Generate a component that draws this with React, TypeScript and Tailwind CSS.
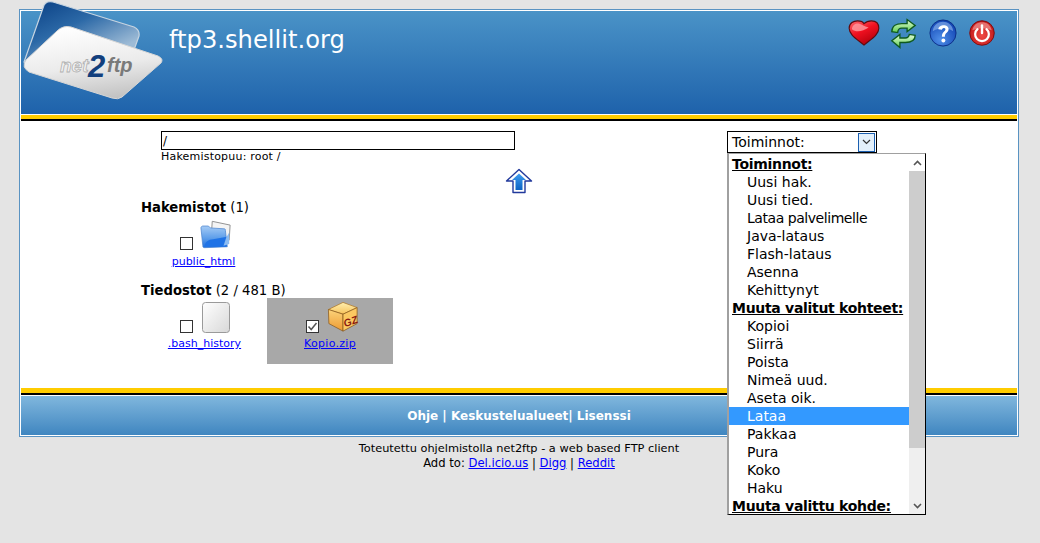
import React from 'react';

const MENU: { label: string; group?: boolean; active?: boolean; tight?: boolean }[] = [
  { label: 'Toiminnot:', group: true },
  { label: 'Uusi hak.' },
  { label: 'Uusi tied.' },
  { label: 'Lataa palvelimelle', tight: true },
  { label: 'Java-lataus' },
  { label: 'Flash-lataus' },
  { label: 'Asenna' },
  { label: 'Kehittynyt' },
  { label: 'Muuta valitut kohteet:', group: true },
  { label: 'Kopioi' },
  { label: 'Siirrä' },
  { label: 'Poista' },
  { label: 'Nimeä uud.' },
  { label: 'Aseta oik.' },
  { label: 'Lataa', active: true },
  { label: 'Pakkaa' },
  { label: 'Pura' },
  { label: 'Koko' },
  { label: 'Haku' },
  { label: 'Muuta valittu kohde:', group: true },
];

// sticks out of the header at the top, so it sits over the band
const Logo = () => (
  <svg width="150" height="105" viewBox="0 0 150 105" className="absolute left-0 top-[-11px]">
    <defs>
      <linearGradient id="lgBack" x1="0.15" y1="0" x2="0.75" y2="0.75">
        <stop offset="0" stopColor="#0d4488" />
        <stop offset="0.45" stopColor="#2c69a7" />
        <stop offset="1" stopColor="#9dbbd6" />
      </linearGradient>
      <linearGradient id="lgFront" x1="0.35" y1="0" x2="0.6" y2="1">
        <stop offset="0" stopColor="#ffffff" />
        <stop offset="0.55" stopColor="#ebebeb" />
        <stop offset="1" stopColor="#c2c2c2" />
      </linearGradient>
    </defs>
    <path d="M3 62 L22 8 Q24 0 32 2 L113 27 Q119 30 118 36 L113 50 L60 70 Z" fill="url(#lgBack)" stroke="#c6d4e1" strokeWidth="1.2" />
    <path d="M5 60 L36 31 Q42 25 50 27 L137 56 Q143 59 140 63 L101 97 Q97 100 91 98 L8 72 Q0 67 5 60 Z" fill="url(#lgFront)" stroke="#d6d6d6" strokeWidth="1" />
    <text x="39" y="72" fontFamily="'Liberation Sans', sans-serif" fontSize="19" fontWeight="700" fontStyle="italic" fill="#f2f2f2" stroke="#b0b0b0" strokeWidth="0.8">net</text>
    <text x="67" y="77" fontFamily="'Liberation Sans', sans-serif" fontSize="31" fontWeight="700" fontStyle="italic" fill="#123f7d">2</text>
    <text x="86" y="72" fontFamily="'Liberation Sans', sans-serif" fontSize="20" fontWeight="700" fontStyle="italic" fill="#7a7a7a">ftp</text>
  </svg>
);

const HeartIcon = () => (
  <svg width="32" height="26" viewBox="0 0 34 28">
    <defs>
      <linearGradient id="hg" x1="0" y1="0" x2="0.6" y2="1">
        <stop offset="0" stopColor="#ff6a70" />
        <stop offset="0.5" stopColor="#f01020" />
        <stop offset="1" stopColor="#b4000c" />
      </linearGradient>
    </defs>
    <path d="M17 27 C10 21 1 16 1 9 C1 3 6 1 10 1 C13 1 16 2 17 4 C19 2 22 1 25 1 C30 1 33 4 33 9 C33 16 24 21 17 27 Z" fill="url(#hg)" stroke="#5e0a0e" strokeWidth="1.2" />
    <path d="M4 10 C4 5 9 3 12 4 C15 5 17 7 22 8 C16 12 9 14 4 10 Z" fill="#ff9ea2" opacity="0.8" />
  </svg>
);

const RefreshIcon = () => (
  <svg width="27" height="31" viewBox="0 0 30 34">
    <defs>
      <linearGradient id="rg" x1="0" y1="0" x2="0" y2="1">
        <stop offset="0" stopColor="#e0fbd6" />
        <stop offset="1" stopColor="#63cf52" />
      </linearGradient>
    </defs>
    <path d="M2 15 C2 8 8 6 13 6 L19 6 L19 1.5 L28 8 L19 15 L19 11 L13 11 C10 11 9 12 8.5 16 Z" fill="url(#rg)" stroke="#0f5a20" strokeWidth="1.5" />
    <path d="M28 19 C28 26 22 27 17 27 L11 27 L11 32.5 L2 25 L11 18 L11 22 L17 22 C20 22 21 21 21.5 18 Z" fill="url(#rg)" stroke="#0f5a20" strokeWidth="1.5" />
  </svg>
);

const HelpIcon = () => (
  <svg width="28" height="28" viewBox="0 0 30 30">
    <defs>
      <radialGradient id="bg" cx="0.4" cy="0.75" r="0.8">
        <stop offset="0" stopColor="#4f8fe8" />
        <stop offset="1" stopColor="#0c3fb0" />
      </radialGradient>
    </defs>
    <circle cx="15" cy="15" r="14" fill="url(#bg)" stroke="#0b2c84" strokeWidth="1" />
    <path d="M4 13 C5 6 10 3 15 3 C20 3 25 6 26 13 C18 9 12 9 4 13 Z" fill="#9cc1f3" opacity="0.55" />
    <path d="M10 11 C10.5 5.5 21 5 21 11 C21 14.5 17 14.5 17 19 L13.8 19 C13.8 13.5 17.6 13.5 17.6 11 C17.6 9 14.3 9 13.8 11.5 Z" fill="#fff" />
    <circle cx="15.4" cy="23" r="2.1" fill="#fff" />
  </svg>
);

const PowerIcon = () => (
  <svg width="26" height="26" viewBox="0 0 28 28">
    <defs>
      <radialGradient id="pg" cx="0.5" cy="0.6" r="0.7">
        <stop offset="0" stopColor="#ef4a44" />
        <stop offset="1" stopColor="#b80c10" />
      </radialGradient>
    </defs>
    <circle cx="14" cy="14" r="13.2" fill="url(#pg)" stroke="#7c0a0c" strokeWidth="1" />
    <path d="M3.5 11 C5 5 9 2.5 14 2.5 C19 2.5 23 5 24.5 11 C17 8 11 8 3.5 11 Z" fill="#f7a9a5" opacity="0.6" />
    <path d="M9.2 9.8 A7.4 7.4 0 1 0 18.8 9.8" fill="none" stroke="#fff" strokeWidth="2.4" strokeLinecap="round" />
    <path d="M14 6 V14" stroke="#fff" strokeWidth="2.6" strokeLinecap="round" />
  </svg>
);

const UpArrow = () => (
  <svg width="28" height="26" viewBox="0 0 28 26">
    <defs>
      <linearGradient id="ag" x1="0" y1="0" x2="0" y2="1">
        <stop offset="0" stopColor="#3f9df0" />
        <stop offset="1" stopColor="#0b63c4" />
      </linearGradient>
    </defs>
    <path d="M14 1.5 L26.5 13 L20 13 L20 24.5 L8 24.5 L8 13 L1.5 13 Z" fill="#fff" stroke="#21399c" strokeWidth="1.4" strokeLinejoin="round" />
    <path d="M14 5.5 L21 12 L17.5 12 L17.5 22 L10.5 22 L10.5 12 L7 12 Z" fill="url(#ag)" />
  </svg>
);

const FolderIcon = () => (
  <svg width="32" height="31" viewBox="0 1 34 30">
    <defs>
      <linearGradient id="fg" x1="0" y1="0" x2="0" y2="1">
        <stop offset="0" stopColor="#a5cbf5" />
        <stop offset="0.55" stopColor="#5f9fea" />
        <stop offset="1" stopColor="#1c6ee0" />
      </linearGradient>
    </defs>
    <path d="M13 2 L32 6 L31 22 L12 18 Z" fill="#f4f4f4" stroke="#8d8d8d" strokeWidth="1" />
    <path d="M1 9 C1 8 2 7 3 7 L9 7 L11 9 L26 10 C27 10 27 11 27 12 L29 29 L5 30 C3 30 3 29 3 28 Z" fill="url(#fg)" stroke="#4d86cf" strokeWidth="0.8" />
    <path d="M5 29 C5 24 9 21 14 21 L30 18 L28 29 Z" fill="#1f73e6" />
    <path d="M25 28 L28 19 L31 14 L31 26 Z" fill="#8cbcf2" />
  </svg>
);

const BlankFileIcon = () => (
  <svg width="28" height="31" viewBox="0 0 28 31">
    <defs>
      <linearGradient id="bf" x1="0" y1="0" x2="1" y2="1">
        <stop offset="0" stopColor="#ffffff" />
        <stop offset="1" stopColor="#d8d8d8" />
      </linearGradient>
    </defs>
    <rect x="0.5" y="0.5" width="27" height="30" rx="3" fill="url(#bf)" stroke="#9a9a9a" strokeWidth="1" />
  </svg>
);

const ZipIcon = () => (
  <svg width="32" height="32" viewBox="0 0 34 34">
    <defs>
      <linearGradient id="z1" x1="0" y1="0" x2="0" y2="1">
        <stop offset="0" stopColor="#fff0b0" />
        <stop offset="1" stopColor="#f7c25a" />
      </linearGradient>
      <linearGradient id="z2" x1="0" y1="0" x2="0" y2="1">
        <stop offset="0" stopColor="#fbd37a" />
        <stop offset="1" stopColor="#ee9a32" />
      </linearGradient>
    </defs>
    <path d="M1.5 9 L17 1.5 L32 7 L17 14 Z" fill="url(#z1)" stroke="#b07a2a" strokeWidth="0.8" />
    <path d="M1.5 9 L17 14 L17 32 L2 24 Z" fill="url(#z2)" stroke="#8a5a1c" strokeWidth="0.8" />
    <path d="M17 14 L32 7 L32 24 L17 32 Z" fill="#fbc862" stroke="#8a5a1c" strokeWidth="0.8" />
    <text x="17.5" y="26" fontFamily="'Liberation Sans', sans-serif" fontSize="11" fontWeight="700" fontStyle="italic" fill="#8a1a10" transform="rotate(-20 24 22)">GZ</text>
  </svg>
);

const Box = ({ checked }: { checked?: boolean }) => (
  <span className="flex h-[13px] w-[13px] shrink-0 items-center justify-center border border-[#333] bg-white">
    {checked && (
      <svg width="11" height="11" viewBox="0 0 11 11">
        <path d="M1.5 5.5 L4.2 8.5 L9.5 2" fill="none" stroke="#555" strokeWidth="1.5" />
      </svg>
    )}
  </span>
);

export default function App() {
  return (
    <div className="h-[543px] overflow-hidden bg-[#e4e4e4] pt-[9px] pl-[19px] font-['DejaVu_Sans',Verdana,sans-serif] text-black">
      <div className="w-[1000px] border border-[#5a93c2] bg-white p-px">
        {/* header */}
        <div className="relative mb-px flex h-[103px] justify-between bg-gradient-to-b from-[#4a93c7] to-[#1e62ab]">
          <Logo />
          <div className="ml-[148px] mt-[14px] text-[24.2px] leading-[30px] text-white">ftp3.shellit.org</div>
          <div className="mr-[22px] mt-[6px] flex h-[32px] items-center">
            <HeartIcon />
            <span className="ml-[10px]"><RefreshIcon /></span>
            <span className="ml-[12px]"><HelpIcon /></span>
            <span className="ml-[12px]"><PowerIcon /></span>
          </div>
        </div>
        <div className="h-[4px] bg-[#ffcc00]" />
        <div className="h-[2px] bg-black" />

        {/* main */}
        <div className="flex h-[267px]">
          <div className="w-[706px] shrink-0">
            <div className="ml-[140px] mt-[10px] flex h-[19px] w-[354px] items-center border border-black px-[1px] text-[12px]">/</div>
            <div className="ml-[140px] mt-[1px] text-[11px] leading-[12px] tracking-[0.2px]">Hakemistopuu: root /</div>
            <div className="ml-[484px] mt-[5px]"><UpArrow /></div>
            <div className="ml-[120px] mt-[6px] text-[13.2px] leading-[16px]"><b>Hakemistot</b> (1)</div>
            <div className="ml-[151px] mt-[3px] flex w-[63px] flex-col items-center">
              <div className="ml-[5px] flex items-end gap-[7px]">
                <Box />
                <FolderIcon />
              </div>
              <a className="mt-[6px] whitespace-nowrap text-[11px] leading-[12px] text-[#0000ff] underline">public_html</a>
            </div>
            <div className="ml-[120px] mt-[15px] text-[13.2px] leading-[16px]"><b>Tiedostot</b> (2 / 481 B)</div>
            <div className="ml-[146px] mt-[-1px] flex items-start">
              <div className="flex w-[75px] flex-col items-center pt-[4px]">
                <div className="ml-[1px] flex items-end gap-[9px]">
                  <Box />
                  <BlankFileIcon />
                </div>
                <a className="mt-[5px] whitespace-nowrap text-[11px] leading-[12px] text-[#0000ff] underline">.bash_history</a>
              </div>
              <div className="ml-[25px] flex h-[66px] w-[126px] flex-col items-center bg-[#a8a8a8] pt-[3px]">
                <div className="ml-[4px] flex items-end gap-[8px]">
                  <Box checked />
                  <ZipIcon />
                </div>
                <a className="mt-[5px] whitespace-nowrap text-[11px] leading-[12px] tracking-[0.3px] text-[#0000ff] underline">Kopio.zip</a>
              </div>
            </div>
          </div>

          {/* actions select and its open list */}
          <div className="relative mt-[10px] h-[22px] w-[150px]">
            <div className="flex h-[22px] items-center justify-between border border-black bg-white pl-[4px] pr-px text-[14px]">
              <span>Toiminnot:</span>
              <span className="flex h-[19px] w-[17px] items-center justify-center border border-[#1b5fb0] bg-[#e3f0fb]">
                <svg width="9" height="6" viewBox="0 0 9 6">
                  <path d="M1 1 L4.5 4.5 L8 1" fill="none" stroke="#333" strokeWidth="1.2" />
                </svg>
              </span>
            </div>
            <div className="absolute left-0 top-[22px] z-10 flex h-[362px] w-[199px] overflow-hidden border-b border-l-2 border-r border-t border-b-black border-l-[#a0a0a0] border-r-black border-t-[#a0a0a0] bg-white">
              <div className="w-[180px] shrink-0 pt-px text-[14px] leading-[18px]">
                {MENU.map((m) =>
                  m.group ? (
                    <div key={m.label} className="h-[18px] whitespace-nowrap pl-[3px] font-bold tracking-[-0.3px] underline">{m.label}</div>
                  ) : (
                    <div
                      key={m.label}
                      className={`h-[18px] whitespace-nowrap pl-[18px] ${m.active ? 'bg-[#3399ff] text-white' : ''} ${m.tight ? 'tracking-[-0.45px]' : ''}`}
                    >
                      {m.label}
                    </div>
                  ),
                )}
              </div>
              <div className="flex w-[17px] flex-col bg-[#efefef]">
                <div className="flex h-[17px] shrink-0 items-center justify-center bg-white">
                  <svg width="9" height="6" viewBox="0 0 9 6">
                    <path d="M1 5 L4.5 1.5 L8 5" fill="none" stroke="#555" strokeWidth="1.6" />
                  </svg>
                </div>
                <div className="h-[277px] bg-[#cdcdcd]" />
                <div className="mt-auto flex h-[17px] shrink-0 items-center justify-center">
                  <svg width="9" height="6" viewBox="0 0 9 6">
                    <path d="M1 1 L4.5 4.5 L8 1" fill="none" stroke="#555" strokeWidth="1.6" />
                  </svg>
                </div>
              </div>
            </div>
          </div>
        </div>

        {/* footer band */}
        <div className="h-[5px] bg-[#ffcc00]" />
        <div className="h-[2px] bg-black" />
        <div className="mt-px flex h-[39px] items-center justify-center bg-gradient-to-b from-[#80b7dd] to-[#3f86c0] text-[12px] font-bold text-white">
          Ohje | Keskustelualueet| Lisenssi
        </div>
      </div>
      <div className="w-[1000px] pt-[4px] text-center leading-[15px]">
        <div className="text-[11.35px]">Toteutettu ohjelmistolla net2ftp - a web based FTP client</div>
        <div className="text-[11.6px]">
          Add to: <a className="text-[#0000ff] underline">Del.icio.us</a> | <a className="text-[#0000ff] underline">Digg</a> | <a className="text-[#0000ff] underline">Reddit</a>
        </div>
      </div>
    </div>
  );
}
